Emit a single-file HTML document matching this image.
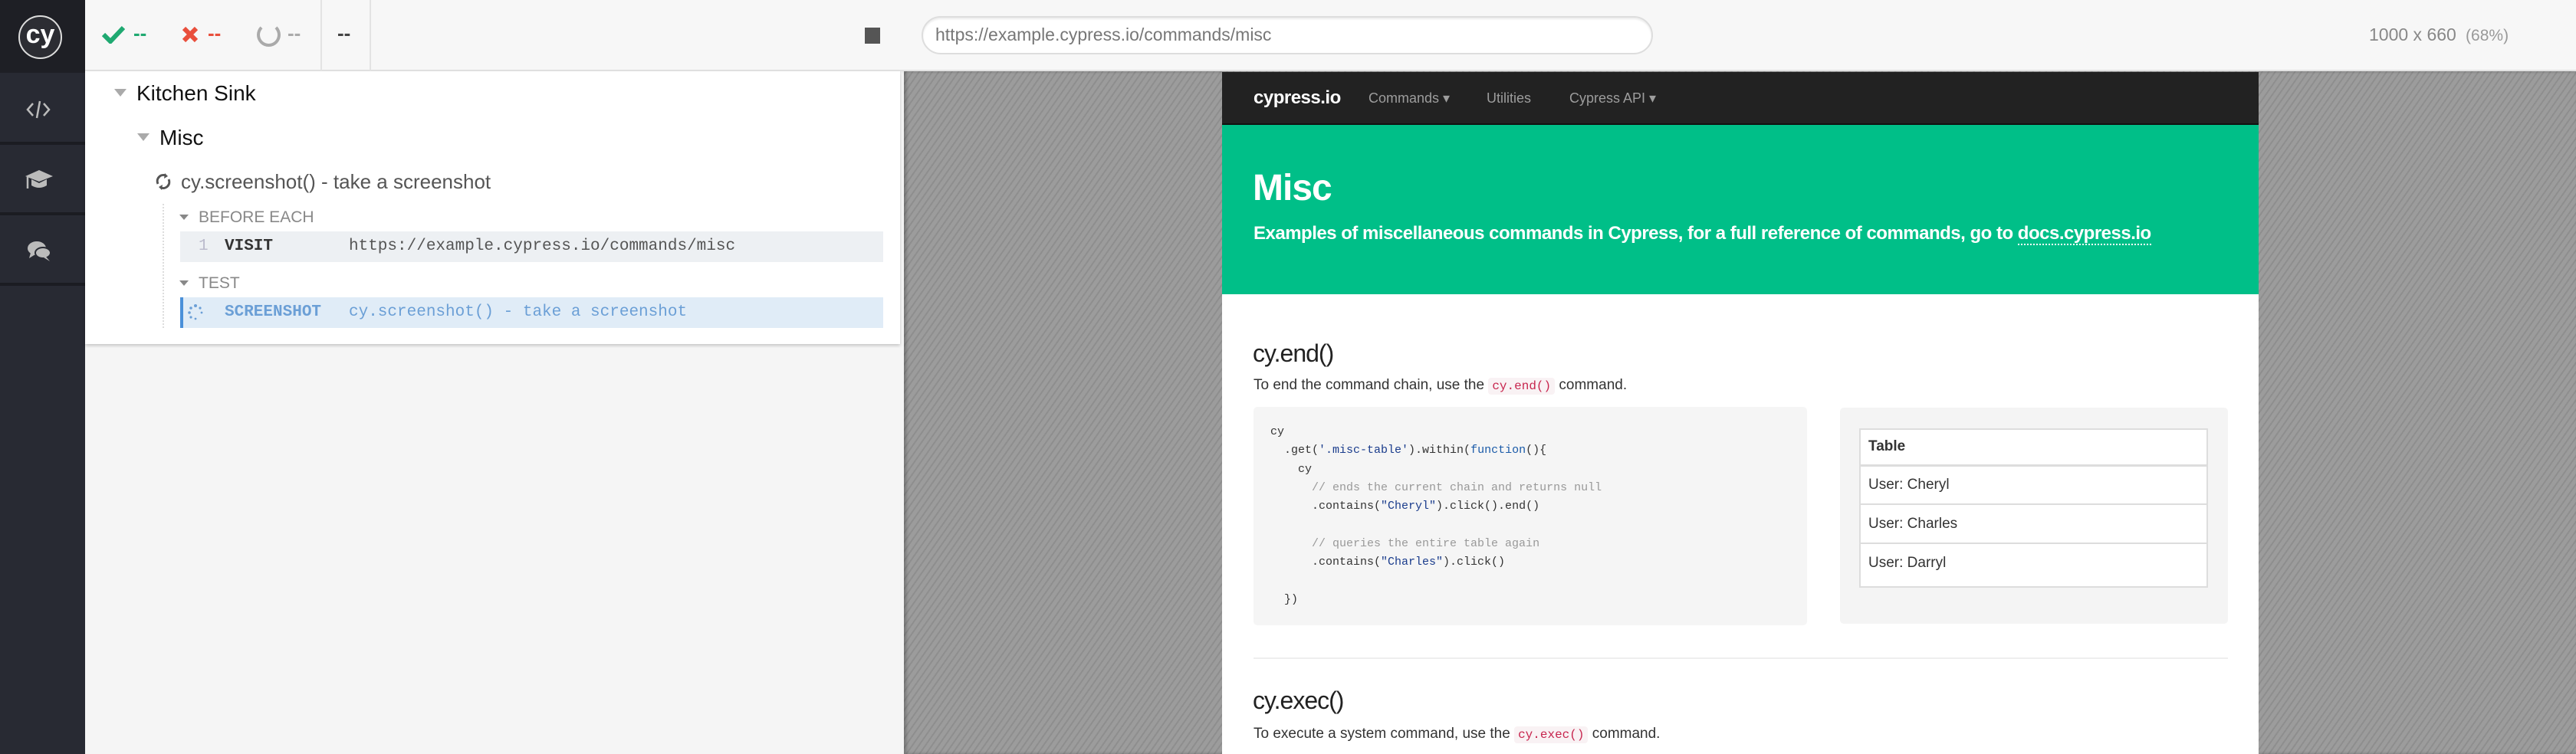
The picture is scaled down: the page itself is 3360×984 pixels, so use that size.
<!DOCTYPE html>
<html><head><meta charset="utf-8"><style>
*{box-sizing:border-box;margin:0;padding:0}
body{width:3360px;height:984px;overflow:hidden;position:relative;font-family:"Liberation Sans",sans-serif;background:#f5f5f5}
.a{position:absolute;white-space:nowrap}
.mono{font-family:"Liberation Mono",monospace}
</style></head><body>
<!-- sidebar -->
<div class="a" style="left:0;top:0;width:111px;height:984px;background:#282a33"></div>
<div class="a" style="left:0;top:0;width:111px;height:95px;background:#1e1f25"></div>
<div class="a" style="left:0;top:185px;width:111px;height:4px;background:#1b1c22"></div>
<div class="a" style="left:0;top:277px;width:111px;height:4px;background:#1b1c22"></div>
<div class="a" style="left:0;top:369px;width:111px;height:4px;background:#1b1c22"></div>
<div class="a" style="left:24px;top:20px;width:57px;height:57px;border:2px solid #ddd;border-radius:50%;background:#2c2d33;color:#fff;font-weight:bold;font-size:34px;line-height:46px;text-align:center">cy</div>
<svg class="a" style="left:34px;top:130px" width="32" height="26" viewBox="0 0 32 26"><path d="M9 5 L2 13 L9 21 M23 5 L30 13 L23 21 M18 2 L14 24" stroke="#bbb" stroke-width="2.5" fill="none"/></svg>
<svg class="a" style="left:32px;top:220px" width="38" height="28" viewBox="0 0 38 28"><path d="M1 10 L19 2 L37 10 L19 17 Z" fill="#bbb"/><path d="M9 14 V22 Q19 28 29 22 V14 L19 19 Z" fill="#bbb"/><path d="M4 11 V26" stroke="#bbb" stroke-width="2.5"/></svg>
<svg class="a" style="left:35px;top:314px" width="32" height="28" viewBox="0 0 32 28"><ellipse cx="13" cy="10" rx="12" ry="9" fill="#bbb"/><path d="M5 16 L3 23 L11 18Z" fill="#bbb"/><ellipse cx="21" cy="16" rx="10" ry="7" fill="#bbb" stroke="#282a33" stroke-width="2"/><path d="M25 21 L30 27 L22 22Z" fill="#bbb"/></svg>
<!-- top bar -->
<div class="a" style="left:111px;top:0;width:3249px;height:92px;background:#f7f7f7;border-bottom:1px solid #e0e0e0;box-shadow:0 2px 3px rgba(0,0,0,.08)"></div>
<svg class="a" style="left:133px;top:33px" width="30" height="24" viewBox="0 0 30 24"><path d="M2 12 L11 21 L28 3" stroke="#1fa971" stroke-width="6" fill="none"/></svg>
<div class="a" style="left:174px;top:28px;font-size:26px;color:#1fa971;font-weight:bold">--</div>
<svg class="a" style="left:237px;top:34px" width="22" height="22" viewBox="0 0 22 22"><path d="M3 3 L19 19 M19 3 L3 19" stroke="#e94f3c" stroke-width="6"/></svg>
<div class="a" style="left:271px;top:28px;font-size:26px;color:#e94f3c;font-weight:bold">--</div>
<div class="a" style="left:335px;top:30px;width:31px;height:31px;border:4px solid #aaa;border-radius:50%;border-top-color:#f7f7f7"></div>
<div class="a" style="left:375px;top:28px;font-size:26px;color:#aaa;font-weight:bold">--</div>
<div class="a" style="left:418px;top:0;width:2px;height:92px;background:#e3e3e3"></div>
<div class="a" style="left:482px;top:0;width:2px;height:92px;background:#e3e3e3"></div>
<div class="a" style="left:440px;top:28px;font-size:26px;color:#444;font-weight:bold">--</div>
<div class="a" style="left:1128px;top:36px;width:20px;height:21px;background:#555"></div>
<div class="a" style="left:1202px;top:21px;width:954px;height:50px;background:#fff;border:2px solid #ddd;border-radius:25px;box-shadow:inset 0 2px 2px rgba(0,0,0,.08)"></div>
<div class="a" style="left:1220px;top:30px;font-size:23px;color:#777;line-height:30px">https://example.cypress.io/commands/misc</div>
<div class="a" style="left:3090px;top:30px;font-size:23px;color:#888;line-height:30px">1000 x 660 <span style="font-size:21px;color:#999">&nbsp;(68%)</span></div>
<!-- reporter -->
<div class="a" style="left:111px;top:93px;width:1063px;height:356px;background:#fff;box-shadow:0 2px 4px rgba(0,0,0,.2)"></div>
<div class="a" style="left:149px;top:116px;width:0;height:0;border-left:8px solid transparent;border-right:8px solid transparent;border-top:10px solid #aaa"></div>
<div class="a" style="left:178px;top:104px;font-size:28px;color:#111;line-height:36px">Kitchen Sink</div>
<div class="a" style="left:179px;top:174px;width:0;height:0;border-left:8px solid transparent;border-right:8px solid transparent;border-top:10px solid #aaa"></div>
<div class="a" style="left:208px;top:162px;font-size:28px;color:#111;line-height:36px">Misc</div>
<svg class="a" style="left:202px;top:226px" width="22" height="22" viewBox="0 0 22 22"><path d="M4 14 A8 8 0 0 1 14 3 M18 8 A8 8 0 0 1 8 19" stroke="#555" stroke-width="3" fill="none"/><path d="M13 0 L17 4 L12 7Z M9 22 L5 18 L10 15Z" fill="#555"/></svg>
<div class="a" style="left:236px;top:220px;font-size:26px;color:#555;line-height:34px">cy.screenshot() - take a screenshot</div>
<div class="a" style="left:212px;top:266px;width:0;height:162px;border-left:2px dotted #ddd"></div>
<div class="a" style="left:234px;top:280px;width:0;height:0;border-left:6px solid transparent;border-right:6px solid transparent;border-top:7px solid #888"></div>
<div class="a" style="left:259px;top:270px;font-size:21px;color:#888;line-height:28px">BEFORE EACH</div>
<div class="a" style="left:235px;top:302px;width:917px;height:40px;background:#edf0f3"></div>
<div class="a mono" style="left:259px;top:308px;font-size:21px;color:#bbc;line-height:28px">1</div>
<div class="a mono" style="left:293px;top:308px;font-size:21px;color:#333;font-weight:bold;line-height:28px">VISIT</div>
<div class="a mono" style="left:455px;top:308px;font-size:21px;color:#555;line-height:28px">https://example.cypress.io/commands/misc</div>
<div class="a" style="left:234px;top:366px;width:0;height:0;border-left:6px solid transparent;border-right:6px solid transparent;border-top:7px solid #888"></div>
<div class="a" style="left:259px;top:356px;font-size:21px;color:#888;line-height:28px">TEST</div>
<div class="a" style="left:235px;top:388px;width:917px;height:40px;background:#e0ecf7;border-left:4px solid #4a90d9"></div>
<svg class="a" style="left:244px;top:396px" width="22" height="22" viewBox="0 0 22 22" fill="#6b9fd6"><circle cx="11" cy="3" r="2"/><circle cx="17" cy="6" r="1.6"/><circle cx="19" cy="12" r="1.4"/><circle cx="5" cy="6" r="1.8"/><circle cx="3" cy="12" r="1.8"/><circle cx="5" cy="18" r="1.6"/><circle cx="11" cy="20" r="1.4"/></svg>
<div class="a mono" style="left:293px;top:394px;font-size:21px;color:#6b9fd6;font-weight:bold;line-height:28px">SCREENSHOT</div>
<div class="a mono" style="left:455px;top:394px;font-size:21px;color:#6b9fd6;line-height:28px">cy.screenshot() - take a screenshot</div>
<!-- AUT -->
<div class="a" style="left:1179px;top:93px;width:2181px;height:891px;background:repeating-linear-gradient(-55deg,#9c9c9c 0 5px,#8e8e8e 5px 7px);box-shadow:inset 3px 0 4px rgba(0,0,0,.25)"></div>
<div class="a" style="left:1594px;top:94px;width:1352px;height:890px;background:#fff;overflow:hidden">
 <div class="a" style="left:0;top:0;width:1352px;height:69px;background:#222;border-bottom:2px solid #111"></div>
 <div class="a" style="left:41px;top:18px;font-size:24px;color:#fff;font-weight:bold;line-height:32px;letter-spacing:-0.5px">cypress.io</div>
 <div class="a" style="left:191px;top:21px;font-size:18px;color:#9d9d9d;line-height:26px">Commands ▾</div>
 <div class="a" style="left:345px;top:21px;font-size:18px;color:#9d9d9d;line-height:26px">Utilities</div>
 <div class="a" style="left:453px;top:21px;font-size:18px;color:#9d9d9d;line-height:26px">Cypress API ▾</div>
 <div class="a" style="left:0;top:69px;width:1352px;height:221px;background:#00bf88"></div>
 <div class="a" style="left:40px;top:122px;font-size:48px;color:#fff;font-weight:bold;line-height:60px;letter-spacing:-1px">Misc</div>
 <div class="a" style="left:41px;top:195px;font-size:24px;color:#fff;font-weight:bold;line-height:32px;letter-spacing:-0.5px">Examples of miscellaneous commands in Cypress, for a full reference of commands, go to <span style="border-bottom:2px dotted #fff">docs.cypress.io</span></div>
 <div class="a" style="left:40px;top:347px;font-size:32px;color:#222;line-height:40px;letter-spacing:-1px">cy.end()</div>
 <div class="a" style="left:41px;top:396px;font-size:19px;color:#333;line-height:26px">To end the command chain, use the <span class="mono" style="background:#f9f2f4;color:#c7254e;font-size:16px;padding:2px 5px;border-radius:4px">cy.end()</span> command.</div>
 <div class="a" style="left:41px;top:437px;width:722px;height:285px;background:#f5f5f5;border-radius:5px"></div>
 <pre class="a mono" style="white-space:pre;left:63px;top:458px;font-size:15px;line-height:24.3px;color:#333">cy
  .get(<span style="color:#1a3c8c">'.misc-table'</span>).within(<span style="color:#1a5aa8">function</span>(){
    cy
      <span style="color:#999">// ends the current chain and returns null</span>
      .contains(<span style="color:#1a3c8c">"Cheryl"</span>).click().end()

      <span style="color:#999">// queries the entire table again</span>
      .contains(<span style="color:#1a3c8c">"Charles"</span>).click()

  })</pre>
 <div class="a" style="left:806px;top:438px;width:506px;height:282px;background:#f4f4f4;border-radius:5px"></div>
 <div class="a" style="left:831px;top:465px;width:455px;height:208px;background:#fff;border:2px solid #ddd"></div>
 <div class="a" style="left:831px;top:512px;width:455px;height:3px;background:#ddd"></div>
 <div class="a" style="left:831px;top:563px;width:455px;height:2px;background:#ddd"></div>
 <div class="a" style="left:831px;top:614px;width:455px;height:2px;background:#ddd"></div>
 <div class="a" style="left:843px;top:476px;font-size:19px;color:#333;font-weight:bold;line-height:26px">Table</div>
 <div class="a" style="left:843px;top:526px;font-size:19px;color:#333;line-height:26px">User: Cheryl</div>
 <div class="a" style="left:843px;top:577px;font-size:19px;color:#333;line-height:26px">User: Charles</div>
 <div class="a" style="left:843px;top:628px;font-size:19px;color:#333;line-height:26px">User: Darryl</div>
 <div class="a" style="left:41px;top:764px;width:1271px;height:2px;background:#eee"></div>
 <div class="a" style="left:40px;top:800px;font-size:32px;color:#222;line-height:40px;letter-spacing:-1px">cy.exec()</div>
 <div class="a" style="left:41px;top:851px;font-size:19px;color:#333;line-height:26px">To execute a system command, use the <span class="mono" style="background:#f9f2f4;color:#c7254e;font-size:16px;padding:2px 5px;border-radius:4px">cy.exec()</span> command.</div>
</div>
</body></html>
